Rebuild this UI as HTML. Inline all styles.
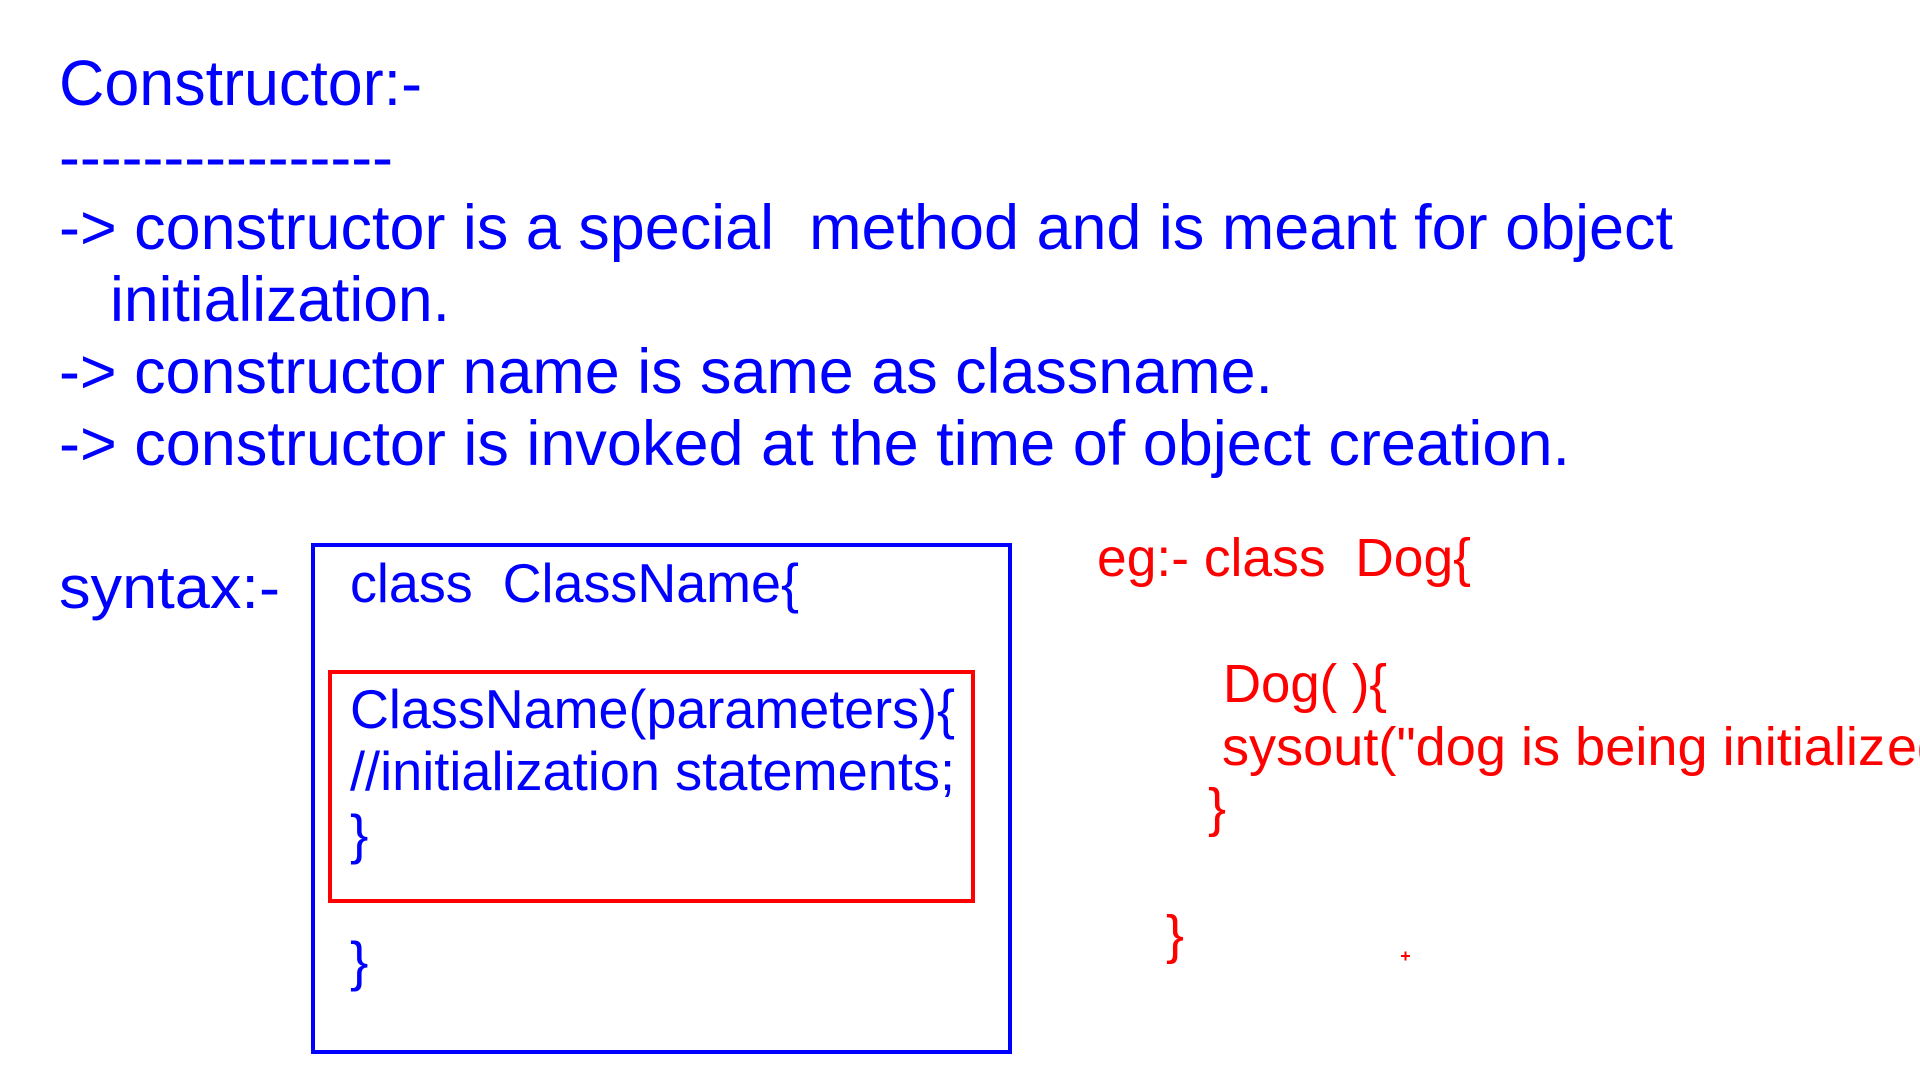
<!DOCTYPE html>
<html><head><meta charset="utf-8"><style>
html,body{margin:0;padding:0;background:#fff;width:1920px;height:1080px;overflow:hidden}
svg{display:block}
text{font-family:"Liberation Sans",Arial,sans-serif;white-space:pre}
</style></head><body>
<svg width="1920" height="1080" viewBox="0 0 1920 1080" xmlns="http://www.w3.org/2000/svg" xml:space="preserve">
<g fill="#0000ff">
<text x="59" y="105" font-size="64" textLength="363" lengthAdjust="spacingAndGlyphs">Constructor:-</text>
<text x="59" y="179" font-size="64" textLength="334" lengthAdjust="spacingAndGlyphs">----------------</text>
<text x="59" y="249" font-size="63" textLength="1614" lengthAdjust="spacingAndGlyphs">-&gt; constructor is a special  method and is meant for object</text>
<text x="110" y="321" font-size="63" textLength="340" lengthAdjust="spacingAndGlyphs">initialization.</text>
<text x="59" y="393" font-size="63" textLength="1214" lengthAdjust="spacingAndGlyphs">-&gt; constructor name is same as classname.</text>
<text x="59" y="465" font-size="63" textLength="1511" lengthAdjust="spacingAndGlyphs">-&gt; constructor is invoked at the time of object creation.</text>
<text x="59" y="608" font-size="60" textLength="221" lengthAdjust="spacingAndGlyphs">syntax:-</text>
<text x="350" y="602" font-size="55" textLength="449" lengthAdjust="spacingAndGlyphs">class  ClassName{</text>
<text x="350" y="728" font-size="55" textLength="605" lengthAdjust="spacingAndGlyphs">ClassName(parameters){</text>
<text x="350" y="790" font-size="55" textLength="605" lengthAdjust="spacingAndGlyphs">//initialization statements;</text>
<text x="350" y="853" font-size="55">}</text>
<text x="350" y="980" font-size="55">}</text>
</g>
<rect x="313" y="545" width="697" height="507" fill="none" stroke="#0000ff" stroke-width="4"/>
<rect x="330" y="672" width="643" height="229" fill="none" stroke="#ff0000" stroke-width="4"/>
<g fill="#ff0000">
<text x="1097" y="576" font-size="54" textLength="374" lengthAdjust="spacingAndGlyphs">eg:- class  Dog{</text>
<text x="1223" y="702" font-size="54" textLength="164" lengthAdjust="spacingAndGlyphs">Dog( ){</text>
<text x="1222" y="765" font-size="54" textLength="663" lengthAdjust="spacingAndGlyphs">sysout("dog is being initializ</text>
<text x="1887" y="765" font-size="54">ed");</text>
<text x="1208" y="826" font-size="54">}</text>
<text x="1166" y="953" font-size="54">}</text>
<rect x="1401" y="955" width="9" height="2"/>
<rect x="1404.5" y="951.5" width="2" height="9"/>
</g>
</svg>
</body></html>
